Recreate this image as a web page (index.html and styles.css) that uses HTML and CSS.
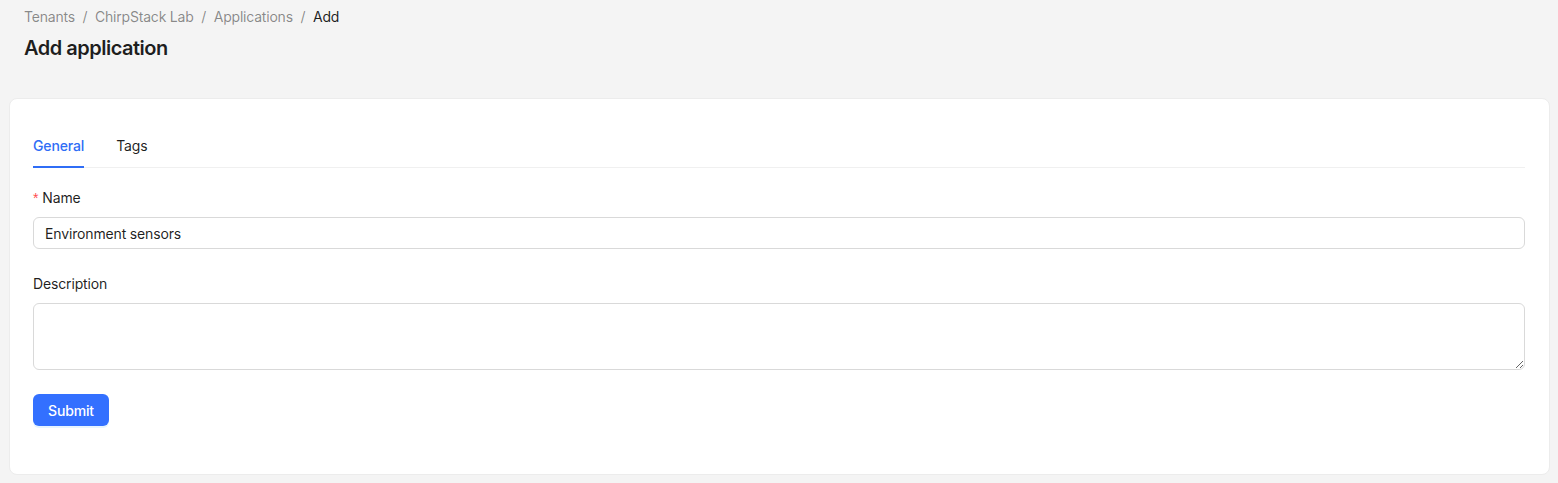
FILE: index.html
```html
<!DOCTYPE html>
<html lang="en">
<head>
<meta charset="utf-8">
<title>Add application</title>
<link rel="stylesheet" href="styles.css">
</head>
<body>
<div class="page-header">
  <nav class="breadcrumb">
    <span class="crumb">Tenants</span><span class="sep">/</span>
    <span class="crumb">ChirpStack Lab</span><span class="sep">/</span>
    <span class="crumb">Applications</span><span class="sep">/</span>
    <span class="crumb current">Add</span>
  </nav>
  <h1 class="title">Add application</h1>
</div>
<div class="card">
  <div class="tabs">
    <div class="tab active">General</div>
    <div class="tab">Tags</div>
  </div>
  <form class="form">
    <div class="form-item">
      <label class="label"><span class="req">*</span>Name</label>
      <input class="input" type="text" value="Environment sensors">
    </div>
    <div class="form-item">
      <label class="label">Description</label>
      <textarea class="textarea"></textarea>
    </div>
    <div class="form-item">
      <button class="btn" type="button">Submit</button>
    </div>
  </form>
</div>
</body>
</html>
```
FILE: styles.css
```css
* { box-sizing: border-box; }
html, body { margin: 0; padding: 0; }
body {
  background: #f4f4f4;
  font-family: Inter, "Noto Sans", "Liberation Sans", sans-serif;
  font-size: 14px;
  letter-spacing: -0.15px;
  color: rgba(0, 0, 0, 0.88);
  height: 483px;
  overflow: hidden;
}
.page-header {
  padding: 6px 24px 0 24px;
}
.breadcrumb {
  display: flex;
  align-items: center;
  line-height: 22px;
  color: rgba(0, 0, 0, 0.45);
  letter-spacing: -0.2px;
}
.sep { margin: 0 7.6px; }
.crumb.current { color: rgba(0, 0, 0, 0.88); }
.title {
  margin: 6px 0 0 0;
  font-size: 20px;
  line-height: 28px;
  font-weight: 600;
  letter-spacing: -0.5px;
}
.card {
  margin: 36px 8px 0 9px;
  background: #fff;
  border: 1px solid #ececec;
  border-radius: 8px;
  padding: 23px 24px 24px 23px;
}
.tabs {
  display: flex;
  gap: 32px;
  border-bottom: 1px solid #f0f0f0;
}
.tab {
  padding: 13px 0 10px 0;
  line-height: 22px;
  position: relative;
}
.tab.active {
  color: #2f6df6;
  font-weight: 500;
}
.tab.active::after {
  content: "";
  position: absolute;
  left: 0;
  right: 0;
  bottom: -1px;
  height: 2px;
  background: #2f6df6;
}
.form {
  padding-top: 19px;
}
.form-item {
  margin-bottom: 24px;
}
.label {
  display: block;
  line-height: 22px;
  padding-bottom: 8px;
}
.req {
  color: #ff4d4f;
  margin-right: 4px;
  font-family: "Liberation Sans", sans-serif;
}
.input, .textarea {
  display: block;
  width: 100%;
  border: 1px solid #d9d9d9;
  border-radius: 6px;
  font-family: inherit;
  font-size: 14px;
  letter-spacing: -0.15px;
  color: rgba(0, 0, 0, 0.88);
  background: #fff;
  padding: 4px 11px;
  outline: none;
}
.input {
  height: 32px;
  line-height: 22px;
}
.textarea {
  height: 67px;
  line-height: 22px;
  resize: vertical;
}
.btn {
  display: block;
  height: 32px;
  padding: 0 15px;
  border: none;
  border-radius: 6px;
  background: #3370ff;
  color: #fff;
  font-family: inherit;
  font-size: 14px;
  letter-spacing: -0.15px;
  font-weight: 500;
  box-shadow: 0 2px 0 rgba(5, 145, 255, 0.1);
  cursor: pointer;
}
```
